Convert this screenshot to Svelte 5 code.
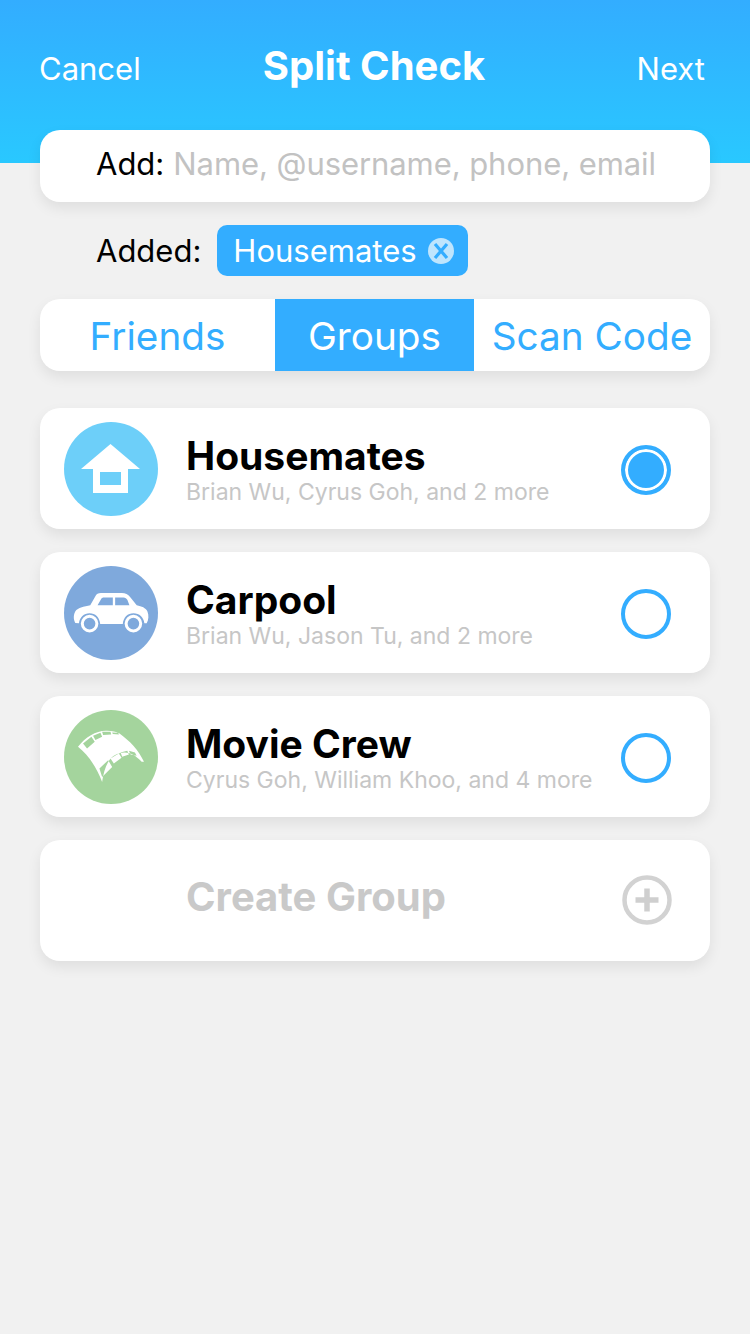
<script>
	let groups = [
		{ name: 'Housemates', members: 'Brian Wu, Cyrus Goh, and 2 more', color: '#6dcff9', icon: 'house', selected: true },
		{ name: 'Carpool', members: 'Brian Wu, Jason Tu, and 2 more', color: '#7fa9dc', icon: 'car', selected: false },
		{ name: 'Movie Crew', members: 'Cyrus Goh, William Khoo, and 4 more', color: '#a4d49d', icon: 'film', selected: false }
	];
</script>

<div class="page">
	<header class="header">
		<span class="nav-btn">Cancel</span>
		<h1>Split Check</h1>
		<span class="nav-btn next">Next</span>
	</header>

	<div class="search card">
		<span class="label">Add:</span>
		<span class="placeholder">Name, @username, phone, email</span>
	</div>

	<div class="added">
		<span class="label">Added:</span>
		<span class="chip">
			Housemates
			<svg width="26" height="26" viewBox="0 0 26 26">
				<circle cx="13" cy="13" r="13" fill="#bfe5fd" />
				<path d="M7 6 19 20M19 6 7 20" stroke="#33adff" stroke-width="3.200" fill="none" />
			</svg>
		</span>
	</div>

	<div class="tabs card">
		<span class="tab friends">Friends</span>
		<span class="tab groups active">Groups</span>
		<span class="tab scan">Scan Code</span>
	</div>

	<div class="list">
		{#each groups as group}
			<div class="row card">
				<div class="avatar" style="background: {group.color}">
					{#if group.icon === 'house'}
						<svg width="60" height="50" viewBox="0 0 60 50">
							<path fill="#fff" fill-rule="evenodd" d="M29.500 0 59 25H47V49H12V25H0ZM19 28V41H40V28Z" />
						</svg>
					{:else if group.icon === 'car'}
						<svg width="78" height="44" viewBox="95 110 235 130">
							<path fill="#fff" fill-rule="evenodd" d="M105 205C99 195 98 178 108 166C120 157 138 155 150 152L165 125C169 118 174 115 182 115H245C256 115 264 119 270 127L290 152C305 155 317 160 322 170C327 182 326 196 320 206H313C311 188 298 176 280 176C263 176 250 188 248 208H180C178 188 165 176 148 176C131 176 118 188 116 206ZM172 152H218V128H192C187 128 184 130 182 134ZM225 152H268L262 136C259 131 256 128 250 128H225Z" />
							<circle cx="148" cy="207" r="22" fill="none" stroke="#fff" stroke-width="9" />
							<circle cx="280" cy="207" r="22" fill="none" stroke="#fff" stroke-width="9" />
						</svg>
					{:else}
						<svg width="68" height="53" viewBox="115 95 203 158">
							<path fill="#fff" fill-rule="evenodd" d="M118 145C140 115 175 95 205 97C220 97 232 100 242 105C270 125 300 155 315 190L308 190C280 160 255 155 225 172C205 185 195 215 190 250C175 210 150 170 118 145ZM133 135 145 150 168 130 158 115ZM163 112 170 125 190 115 185 103ZM190 100 193 110 217 108 215 100ZM220 102 222 107 240 108 238 103ZM182 210 190 235 220 205 208 185ZM215 180 225 195 248 178 240 165ZM245 162 250 175 270 168 265 157ZM270 157 275 168 293 172 288 162Z" />
						</svg>
					{/if}
				</div>
				<div class="info">
					<div class="name">{group.name}</div>
					<div class="members">{group.members}</div>
				</div>
				<div class="radio" class:selected={group.selected}></div>
			</div>
		{/each}

		<div class="row card create">
			<div class="name">Create Group</div>
			<svg width="50" height="50" viewBox="0 0 50 50">
				<circle cx="25" cy="25" r="22.500" fill="none" stroke="#d2d2d2" stroke-width="4.500" />
				<path d="M25 13.500V36.500M13.500 25H36.500" stroke="#cfcfcf" stroke-width="5.500" />
			</svg>
		</div>
	</div>
</div>

<style>
	:global(body) {
		background: #f1f1f1;
	}

	.page {
		min-height: 1334px;
		background: #f1f1f1;
		font-family: Inter, 'Liberation Sans', sans-serif;
	}

	.header {
		height: 163px;
		box-sizing: border-box;
		padding: 46px 45px 0 39px;
		display: grid;
		grid-template-columns: 1fr auto 1fr;
		align-items: start;
		background: linear-gradient(#33adff, #29c8ff);
		color: #fff;
	}

	.header h1 {
		margin: 0 0 0 4px;
		font-size: 40px;
		line-height: 40px;
		font-weight: 700;
		white-space: nowrap;
	}

	.nav-btn {
		font-size: 31px;
		line-height: 46px;
	}

	.next {
		text-align: right;
	}

	.card {
		background: #fff;
		border-radius: 20px;
		box-shadow: 0 6px 14px rgba(0, 0, 0, 0.08);
	}

	.search {
		position: relative;
		height: 72px;
		box-sizing: border-box;
		margin: -33px 40px 0;
		padding: 0 0 6px 56px;
		display: flex;
		align-items: center;
		gap: 9px;
		font-size: 31px;
	}

	.label {
		color: #000;
		font-size: 31px;
	}

	.placeholder {
		color: #c2c2c2;
		letter-spacing: -0.07px;
	}

	.added {
		margin: 23px 0 0 96px;
		display: flex;
		align-items: center;
		gap: 16px;
	}

	.chip {
		height: 51px;
		box-sizing: border-box;
		padding: 0 14px 0 16px;
		display: flex;
		align-items: center;
		gap: 11px;
		background: #33adff;
		border-radius: 10px;
		color: #fff;
		font-size: 31px;
	}

	.tabs {
		margin: 23px 40px 0;
		height: 72px;
		display: flex;
		overflow: hidden;
		color: #33adff;
		font-size: 38.700px;
	}

	.tab {
		box-sizing: border-box;
		padding-top: 2px;
		display: flex;
		align-items: center;
		justify-content: center;
	}

	.friends {
		width: 235px;
	}

	.groups {
		width: 199px;
	}

	.scan {
		width: 236px;
	}

	.active {
		background: #33adff;
		color: #fff;
	}

	.list {
		margin: 37px 40px 0;
		display: flex;
		flex-direction: column;
		gap: 23px;
	}

	.row {
		height: 121px;
		display: flex;
		align-items: center;
		padding: 0 39px 0 24px;
	}

	.avatar {
		width: 94px;
		height: 94px;
		flex: none;
		border-radius: 50%;
		display: flex;
		align-items: center;
		justify-content: center;
	}

	.info {
		flex: 1;
		margin-left: 28px;
		padding-top: 1px;
	}

	.name {
		font-size: 39px;
		line-height: 45px;
		font-weight: 700;
		color: #000;
	}

	.members {
		font-size: 23px;
		line-height: 28px;
		color: #c6c6c6;
		white-space: nowrap;
	}

	.radio {
		width: 50px;
		height: 50px;
		margin-top: 2px;
		box-sizing: border-box;
		flex: none;
		border: 4px solid #33adff;
		border-radius: 50%;
	}

	.radio.selected {
		background: #33adff;
		box-shadow: inset 0 0 0 3px #fff;
	}

	.create {
		justify-content: space-between;
		padding: 0 38px 0 146px;
	}

	.create .name {
		padding-bottom: 8px;
		font-size: 40px;
		color: #c9c9c9;
	}

	.create svg {
		margin-bottom: 2px;
	}
</style>
